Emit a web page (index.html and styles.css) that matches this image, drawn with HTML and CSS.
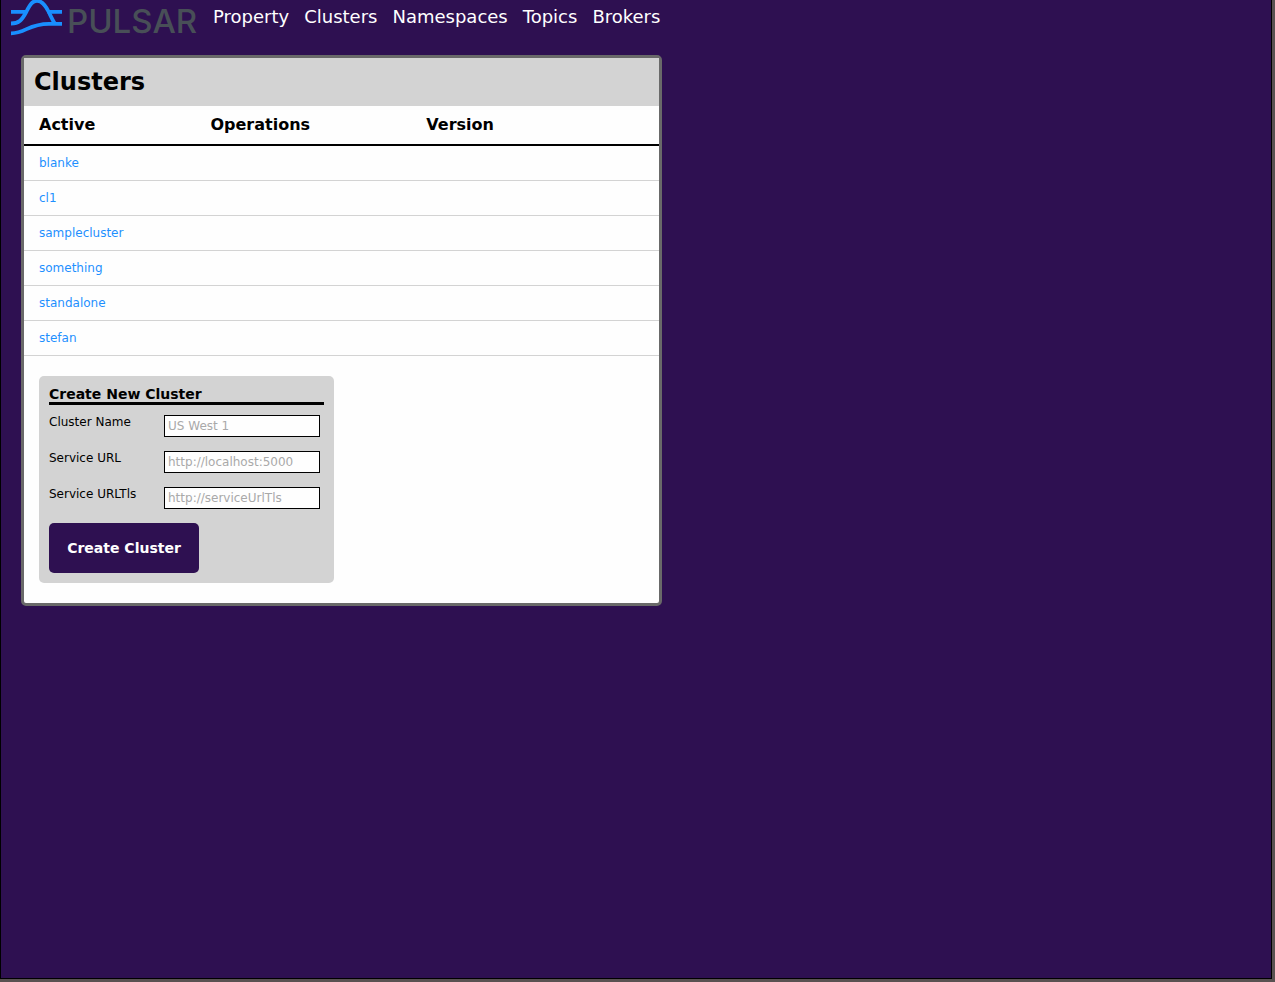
FILE: index.html
```
<!DOCTYPE html>
<html lang="en">
<head>
<meta charset="utf-8">
<meta name="viewport" content="width=device-width, initial-scale=1">
<title>Pulsar - Clusters</title>
<link rel="stylesheet" href="styles.css">
</head>
<body>
<div class="page">
  <header class="topbar">
    <a class="logo" href="#">
      <svg class="logo-mark" width="52" height="36" viewBox="0 0 52 36" fill="none" stroke="#198fff" stroke-width="3.8" aria-hidden="true">
        <path d="M0 11.800H15.500M36.500 11.800H51"/>
        <path d="M0 23.500C8 23.500 11 20 15.500 11.500C19.500 3.500 22 .8 26 .8C31 .8 34 4.500 37.500 11.500C40 16.500 41 19 44 24"/>
        <path d="M0 33.300C15 33.300 17 23.800 38 23.800H51"/>
      </svg>
      <span class="logo-text">PULSAR</span>
    </a>
    <nav class="nav">
      <a href="#">Property</a>
      <a href="#">Clusters</a>
      <a href="#">Namespaces</a>
      <a href="#">Topics</a>
      <a href="#">Brokers</a>
    </nav>
  </header>
  <main class="card">
    <h1 class="card-title">Clusters</h1>
    <table class="clusters">
      <thead>
        <tr><th class="col-active">Active</th><th class="col-operations">Operations</th><th>Version</th></tr>
      </thead>
      <tbody>
        <tr><td><a href="#">blanke</a></td><td></td><td></td></tr>
        <tr><td><a href="#">cl1</a></td><td></td><td></td></tr>
        <tr><td><a href="#">samplecluster</a></td><td></td><td></td></tr>
        <tr><td><a href="#">something</a></td><td></td><td></td></tr>
        <tr><td><a href="#">standalone</a></td><td></td><td></td></tr>
        <tr><td><a href="#">stefan</a></td><td></td><td></td></tr>
      </tbody>
    </table>
    <form class="create">
      <h2 class="create-title">Create New Cluster</h2>
      <div class="field"><label for="name">Cluster Name</label><input id="name" type="text" placeholder="US West 1"></div>
      <div class="field"><label for="url">Service URL</label><input id="url" type="text" placeholder="http://localhost:5000"></div>
      <div class="field"><label for="tls">Service URLTls</label><input id="tls" type="text" placeholder="http://serviceUrlTls"></div>
      <button class="submit" type="button">Create Cluster</button>
    </form>
  </main>
</div>
</body>
</html>
```
FILE: styles.css
```
* {
  box-sizing: border-box;
}

body {
  margin: 0;
  min-height: 100vh;
  display: flex;
  padding: 0 3px 3px 0;
  background: #595151;
  color: #000;
  font-family: "DejaVu Sans", sans-serif;
  font-size: 12px;
}

a {
  text-decoration: none;
}

.page {
  flex: 1;
  border: solid #000;
  border-width: 0 1px 1px;
  background: #2e1051;
}

.topbar {
  display: flex;
  align-items: flex-start;
  height: 55px;
  padding-left: 10px;
}

.logo {
  display: flex;
  width: 187px;
  gap: 4px;
}

.logo-mark {
  flex: none;
}

.logo-text {
  color: #484f57;
  font-family: Inter, sans-serif;
  font-size: 33px;
  font-weight: 500;
  line-height: 43px;
}

.nav {
  display: flex;
  gap: 15px;
  margin-left: 15px;
  font-size: 18px;
  line-height: 34px;
}

.nav a {
  color: #fff;
}

.card {
  width: calc(50% + 6px);
  margin-left: 20px;
  padding-bottom: 20px;
  border: 3px solid #696969;
  border-radius: 5px;
  background: #fefefe;
}

.card-title {
  margin: 0;
  padding: 0 10px;
  background: #d3d3d3;
  font-size: 24px;
  line-height: 48px;
}

.clusters {
  width: 100%;
  table-layout: fixed;
  border-collapse: separate;
  border-spacing: 0;
  text-align: left;
}

.clusters th {
  height: 40px;
  padding: 0 15px 2px;
  border-bottom: 2px solid #000;
  font-size: 16px;
}

.clusters td {
  height: 35px;
  padding: 0 15px;
  border-bottom: 1px solid #d3d3d3;
}

.clusters a {
  color: #1e90ff;
}

.col-active {
  width: 27%;
}

.col-operations {
  width: 34%;
}

.create {
  width: 295px;
  margin: 20px 0 0 15px;
  padding: 10px;
  border-radius: 5px;
  background: #d3d3d3;
}

.create-title {
  margin: 0 0 10px;
  border-bottom: 3px solid #000;
  font-size: 14px;
  line-height: 16px;
}

.field {
  display: flex;
  align-items: flex-start;
  margin-bottom: 14px;
}

.field label {
  width: 115px;
  line-height: 14px;
}

.field input {
  width: 156px;
  height: 22px;
  padding: 0 3px;
  border: 1px solid #000;
  background: #fefefe;
  font: inherit;
}

.field input::placeholder {
  color: #a9a9a9;
}

.submit {
  display: block;
  width: 150px;
  height: 50px;
  padding: 0;
  border: 0;
  border-radius: 5px;
  background: #2e1051;
  color: #fff;
  font: inherit;
  font-size: 14px;
  font-weight: bold;
}
```
